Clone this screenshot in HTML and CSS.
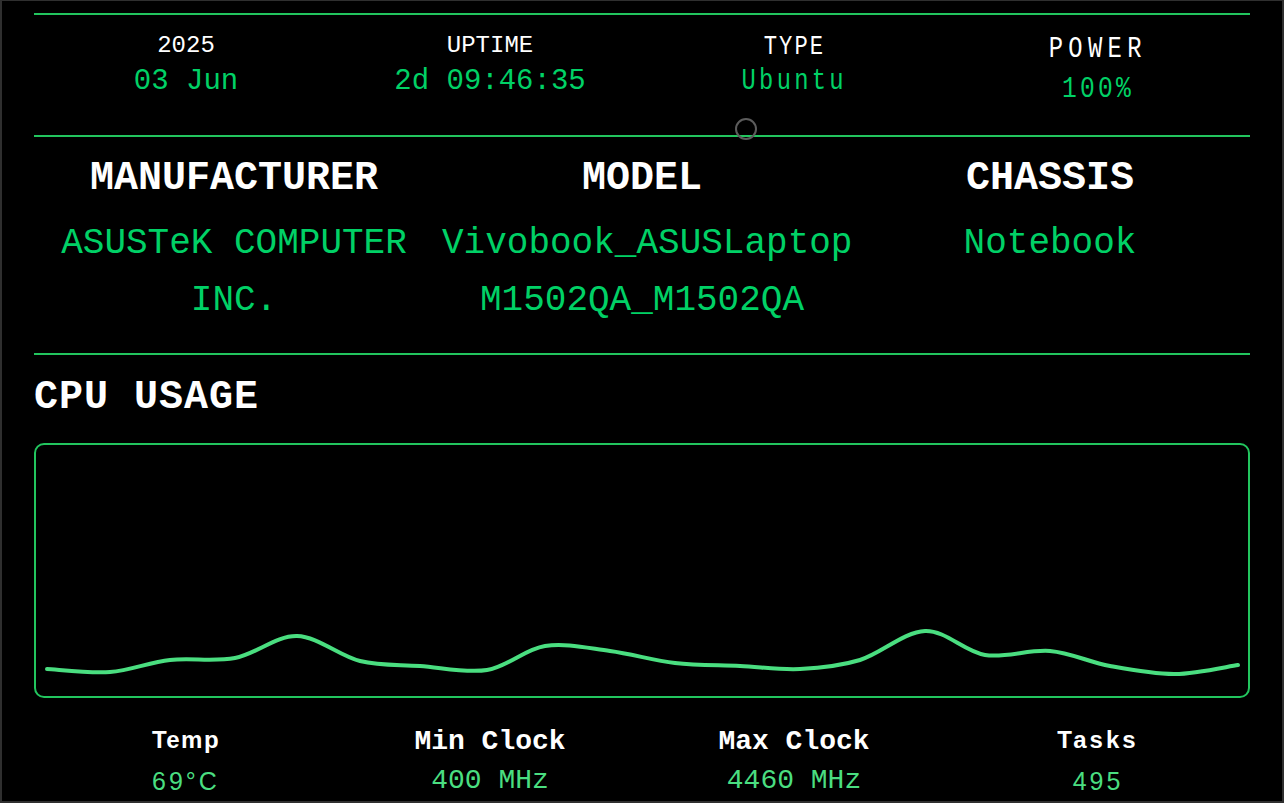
FILE: index.html
```html
<!DOCTYPE html>
<html lang="en">
<head>
<meta charset="utf-8">
<title>System Monitor</title>
<link rel="stylesheet" href="styles.css">
</head>
<body>
<main class="screen">
  <section class="summary">
    <div class="stat">
      <div class="stat-label">2025</div>
      <div class="stat-value">03 Jun</div>
    </div>
    <div class="stat">
      <div class="stat-label">UPTIME</div>
      <div class="stat-value">2d 09:46:35</div>
    </div>
    <div class="stat">
      <div class="stat-label stat-label-type"><span class="cond">TYPE</span></div>
      <div class="stat-value stat-value-type"><span class="cond">Ubuntu</span></div>
    </div>
    <div class="stat">
      <div class="stat-label stat-label-power"><span class="cond">POWER</span></div>
      <div class="stat-value stat-value-power"><span class="cond">100%</span></div>
    </div>
    <span class="dot"></span>
  </section>

  <section class="hardware">
    <div class="hw">
      <h2 class="hw-title">MANUFACTURER</h2>
      <p class="hw-value">ASUSTeK COMPUTER INC.</p>
    </div>
    <div class="hw">
      <h2 class="hw-title">MODEL</h2>
      <p class="hw-value">Vivobook_ASUSLaptop M1502QA_M1502QA</p>
    </div>
    <div class="hw">
      <h2 class="hw-title">CHASSIS</h2>
      <p class="hw-value">Notebook</p>
    </div>
  </section>

  <section class="cpu">
    <h2 class="cpu-title">CPU USAGE</h2>
    <div class="chart">
      <svg class="chart-svg" viewBox="0 0 1212 251" preserveAspectRatio="none">
        <path class="chart-line" d="M11 224 C21.5 224.5 53.5 228.5 74 227 C94.5 225.5 113.2 217.3 134 215 C154.8 212.7 177.8 217 199 213 C220.2 209 240.2 190.5 261 191 C281.8 191.5 303.5 211 324 216 C344.5 221 362.8 219.5 384 221 C405.2 222.5 430.2 228.3 451 225 C471.8 221.7 488.5 204.2 509 201 C529.5 197.8 552.3 203.2 574 206 C595.7 208.8 617.3 215.5 639 218 C660.7 220.5 683.2 220 704 221 C724.8 222 744 225 764 224 C784 223 803.2 221.3 824 215 C844.8 208.7 868.2 186.8 889 186 C909.8 185.2 928.2 206.7 949 210 C969.8 213.3 993.2 204.2 1014 206 C1034.8 207.8 1053.2 217.2 1074 221 C1094.8 224.8 1117.7 229.2 1139 229 C1160.3 228.8 1191.5 221.5 1202 220"/>
      </svg>
    </div>
    <div class="cpu-stats">
      <div class="cpu-stat">
        <div class="cpu-label cpu-label-sans">Temp</div>
        <div class="cpu-value cpu-value-sans">69°C</div>
      </div>
      <div class="cpu-stat">
        <div class="cpu-label cpu-label-mono">Min Clock</div>
        <div class="cpu-value cpu-value-mono">400 MHz</div>
      </div>
      <div class="cpu-stat">
        <div class="cpu-label cpu-label-mono">Max Clock</div>
        <div class="cpu-value cpu-value-mono">4460 MHz</div>
      </div>
      <div class="cpu-stat">
        <div class="cpu-label cpu-label-sans cpu-label-wide">Tasks</div>
        <div class="cpu-value cpu-value-sans">495</div>
      </div>
    </div>
  </section>
</main>
</body>
</html>
```

FILE: styles.css
```css
html, body {
  margin: 0;
  padding: 0;
}

body {
  background: #000;
  height: 803px;
  box-sizing: border-box;
  border: 2px solid #2f2f2f;
  border-top-width: 1px;
  overflow: hidden;
  font-family: "Liberation Mono", "DejaVu Sans Mono", monospace;
  color: #fff;
}

.screen {
  padding: 12px 32px 0;
}

/* ---------- summary row ---------- */
.summary {
  position: relative;
  display: grid;
  grid-template-columns: repeat(4, 1fr);
  align-items: start;
  height: 124px;
  box-sizing: border-box;
  padding-top: 17px;
  border-top: 2px solid #22c55e;
  border-bottom: 2px solid #22c55e;
}

.stat {
  text-align: center;
}

.stat-label {
  font-size: 24px;
  line-height: 28px;
  color: #fff;
}

.stat-value {
  margin-top: 5px;
  font-size: 29px;
  line-height: 34px;
  color: #00d166;
}

.cond {
  display: inline-block;
  transform: scaleX(0.82);
  transform-origin: center;
}

.stat-label-type {
  margin-top: 1px;
  font-size: 27px;
  letter-spacing: 2.5px;
}

.stat-value-type {
  margin-top: 4px;
  font-size: 29px;
  letter-spacing: 4px;
}

.stat-label-power {
  margin-top: 4px;
  font-size: 29px;
  letter-spacing: 6.5px;
}

.stat-value-power {
  margin-top: 8px;
  font-size: 30px;
  letter-spacing: 4px;
}

.dot {
  position: absolute;
  left: 701px;
  top: 103px;
  width: 22px;
  height: 22px;
  box-sizing: border-box;
  border: 2px solid #5c5c5c;
  border-radius: 50%;
}

/* ---------- hardware row ---------- */
.hardware {
  display: grid;
  grid-template-columns: repeat(3, 1fr);
  column-gap: 8px;
  align-items: start;
  height: 218px;
  box-sizing: border-box;
  padding-top: 18px;
  border-bottom: 2px solid #22c55e;
}

.hw {
  text-align: center;
  min-width: 0;
}

.hw-title {
  margin: 0;
  font-size: 40px;
  line-height: 48px;
  font-weight: bold;
  color: #fff;
}

.hw-value {
  margin: 12px 0 0;
  font-size: 36px;
  line-height: 57px;
  color: #00d166;
}

/* ---------- cpu ---------- */
.cpu {
  padding-top: 19px;
}

.cpu-title {
  margin: 0;
  font-size: 40px;
  line-height: 48px;
  font-weight: bold;
  letter-spacing: 1px;
  color: #fff;
}

.chart {
  margin-top: 21px;
  height: 255px;
  box-sizing: border-box;
  border: 2px solid #22c55e;
  border-radius: 10px;
}

.chart-svg {
  display: block;
  width: 100%;
  height: 100%;
}

.chart-line {
  fill: none;
  stroke: #4ade80;
  stroke-width: 4;
  stroke-linecap: round;
  stroke-linejoin: round;
}

.cpu-stats {
  display: grid;
  grid-template-columns: repeat(4, 1fr);
  margin-top: 28px;
}

.cpu-stat {
  text-align: center;
}

.cpu-label {
  height: 28px;
  line-height: 28px;
  font-weight: bold;
  color: #fff;
}

.cpu-label-sans {
  font-family: "Liberation Sans", Arial, sans-serif;
  font-size: 24px;
  letter-spacing: 1.5px;
}

.cpu-label-wide {
  letter-spacing: 3px;
}

.cpu-label-mono {
  font-family: "Liberation Mono", "DejaVu Sans Mono", monospace;
  font-size: 28px;
  padding-top: 2px;
  box-sizing: border-box;
}

.cpu-value {
  margin-top: 12px;
  line-height: 30px;
  color: #4ade80;
}

.cpu-value-sans {
  font-family: "Liberation Sans", Arial, sans-serif;
  font-size: 25px;
  letter-spacing: 3px;
}

.cpu-value-mono {
  font-family: "Liberation Mono", "DejaVu Sans Mono", monospace;
  font-size: 28px;
}
```
